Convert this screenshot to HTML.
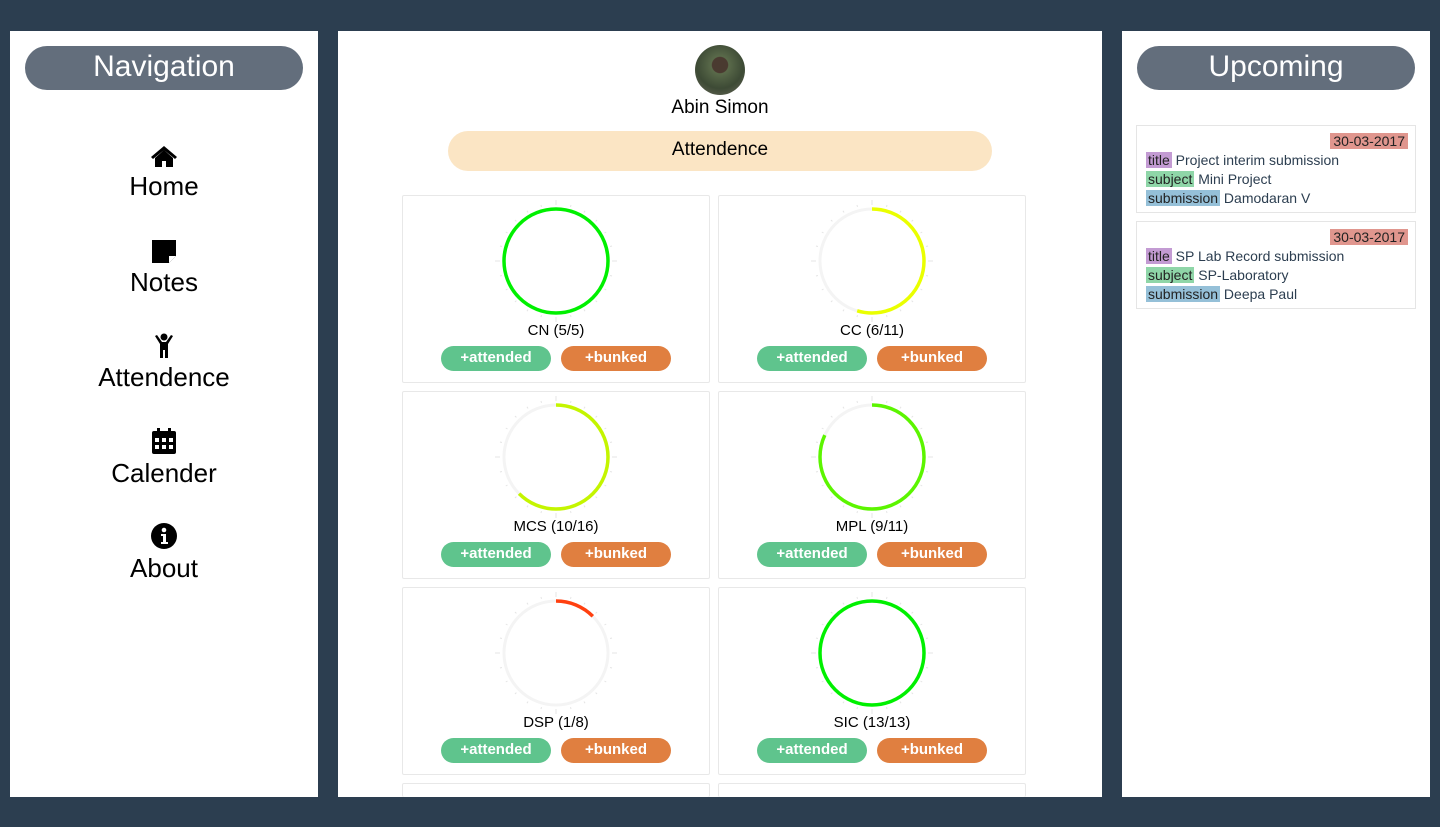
<!DOCTYPE html>
<html><head><meta charset="utf-8"><style>
*{box-sizing:border-box;margin:0;padding:0}
body{width:1440px;height:827px;background:#2c3e50;font-family:"Liberation Sans",sans-serif;position:relative;overflow:hidden;color:#000}
.panel{position:absolute;background:#fff;top:31px;height:766px}
.pill{position:absolute;left:15px;top:15px;width:278px;height:44px;border-radius:22px;background:#636e7c;color:#fff;font-size:30px;text-align:center;line-height:42px}
.nav{position:absolute;left:0;width:308px;text-align:center}
.nav svg{display:block;margin:0 auto}
.nav div{font-size:26px;line-height:30px;margin-top:3px}
.card{position:absolute;width:308px;height:188px;border:1px solid #e8e8e8;border-radius:2px;background:#fff}
.card svg{position:absolute;left:88px;top:0px}
.lbl{position:absolute;top:126px;width:100%;text-align:center;font-size:15px}
.b{position:absolute;top:150px;width:110px;height:25px;border-radius:13px;color:#fff;font-size:15px;text-align:center;line-height:24px;font-weight:bold}
.g{left:38px;background:#5fc48d}.o{left:158px;background:#e07f40}
.up{position:absolute;left:14px;width:280px;height:88px;border:1px solid #e5e5e5;font-size:14px;color:#2c3e50;padding:6px 7px 0 9px;line-height:19px}
.d{text-align:right}.d span{background:#e0968e;padding:0 3px;color:#222}
.t{background:#c39bd3;color:#222;padding:0 2px}.s{background:#8fd6a8;color:#222;padding:0 2px}.m{background:#95c0d8;color:#222;padding:0 2px}
</style></head><body>
<div class="panel" style="left:10px;width:308px">
<div class="pill">Navigation</div>
<div class="nav" style="top:113px"><svg width="28" height="24" viewBox="0 0 28 24"><path d="M14 2L1 13l2 2 11-9 11 9 2-2z M5 14v9h7v-6h4v6h7v-9L14 6z" fill="#000"/></svg><div>Home</div></div>
<div class="nav" style="top:207px"><svg width="28" height="26" viewBox="0 0 28 26"><path d="M2 2h24v16l-7 7H2z" fill="#000"/><path d="M19 25v-7h7z" fill="#fff"/></svg><div>Notes</div></div>
<div class="nav" style="top:302px"><svg width="24" height="26" viewBox="0 0 24 26"><circle cx="12" cy="4" r="3.5"/><path d="M3 3l2-1 5 7h4l5-7 2 1-5 8v14h-3v-8h-2v8H8V11z"/></svg><div>Attendence</div></div>
<div class="nav" style="top:396px"><svg width="28" height="28" viewBox="0 0 28 28"><rect x="2" y="4" width="24" height="23" rx="2" fill="#000"/><rect x="7" y="1" width="3" height="6" fill="#000"/><rect x="18" y="1" width="3" height="6" fill="#000"/><g fill="#fff"><rect x="5" y="11" width="4" height="4"/><rect x="12" y="11" width="4" height="4"/><rect x="19" y="11" width="4" height="4"/><rect x="5" y="18" width="4" height="4"/><rect x="12" y="18" width="4" height="4"/><rect x="19" y="18" width="4" height="4"/></g></svg><div>Calender</div></div>
<div class="nav" style="top:491px"><svg width="28" height="28" viewBox="0 0 28 28"><circle cx="14" cy="14" r="13"/><circle cx="14" cy="8" r="2.3" fill="#fff"/><path d="M11 12h5v8h2v2h-7v-2h2v-6h-2z" fill="#fff"/></svg><div>About</div></div>
</div>

<div class="panel" style="left:338px;width:764px">
<div style="position:absolute;left:357px;top:14px;width:50px;height:50px;border-radius:50%;background:radial-gradient(circle at 50% 40%,#4a3a30 0 20%,#5a6a4a 22%,#3d4a35 60%,#6b6a5c 100%)"></div>
<div style="position:absolute;top:66px;width:100%;text-align:center;font-size:19px">Abin Simon</div>
<div style="position:absolute;left:110px;top:100px;width:544px;height:40px;border-radius:20px;background:#fbe5c4;text-align:center;line-height:38px;font-size:19px">Attendence</div>
</div>

<div class="panel" style="left:1122px;width:308px">
<div class="pill">Upcoming</div>
<div class="up" style="top:94px"><div class="d"><span>30-03-2017</span></div><span class="t">title</span> Project interim submission<br><span class="s">subject</span> Mini Project<br><span class="m">submission</span> Damodaran V</div>
<div class="up" style="top:190px"><div class="d"><span>30-03-2017</span></div><span class="t">title</span> SP Lab Record submission<br><span class="s">subject</span> SP-Laboratory<br><span class="m">submission</span> Deepa Paul</div>
</div>

<div id="cards"></div>
<script>
const data=[["CN (5/5)",1,"#00f000"],["CC (6/11)",6/11,"#eaff00"],["MCS (10/16)",10/16,"#c4f500"],["MPL (9/11)",9/11,"#5cf500"],["DSP (1/8)",1/8,"#ff4010"],["SIC (13/13)",1,"#00f000"]];
let h="";const C=2*Math.PI*52;
let ticks="";for(let i=0;i<24;i++){const a=i*Math.PI/12,l=i%6==0?5:2;const x1=65+Math.sin(a)*56,y1=65-Math.cos(a)*56,x2=65+Math.sin(a)*(56+l),y2=65-Math.cos(a)*(56+l);ticks+=`<line x1="${x1}" y1="${y1}" x2="${x2}" y2="${y2}" stroke="#e4e4e4" stroke-width="1"/>`}
data.forEach((d,i)=>{const x=i%2?718:402,y=195+Math.floor(i/2)*196;
h+=`<div class="card" style="left:${x}px;top:${y}px"><svg width="130" height="130">${ticks}<circle cx="65" cy="65" r="52" fill="none" stroke="#f4f4f4" stroke-width="3"/><circle cx="65" cy="65" r="52" fill="none" stroke="${d[2]}" stroke-width="3.5" stroke-dasharray="${C*d[1]} ${C}" transform="rotate(-90 65 65)"/></svg><div class="lbl">${d[0]}</div><div class="b g">+attended</div><div class="b o">+bunked</div></div>`});
h+=`<div class="card" style="left:402px;top:783px;height:14px;border-bottom:0"></div><div class="card" style="left:718px;top:783px;height:14px;border-bottom:0"></div>`;
document.getElementById("cards").innerHTML=h;
</script>
</body></html>
